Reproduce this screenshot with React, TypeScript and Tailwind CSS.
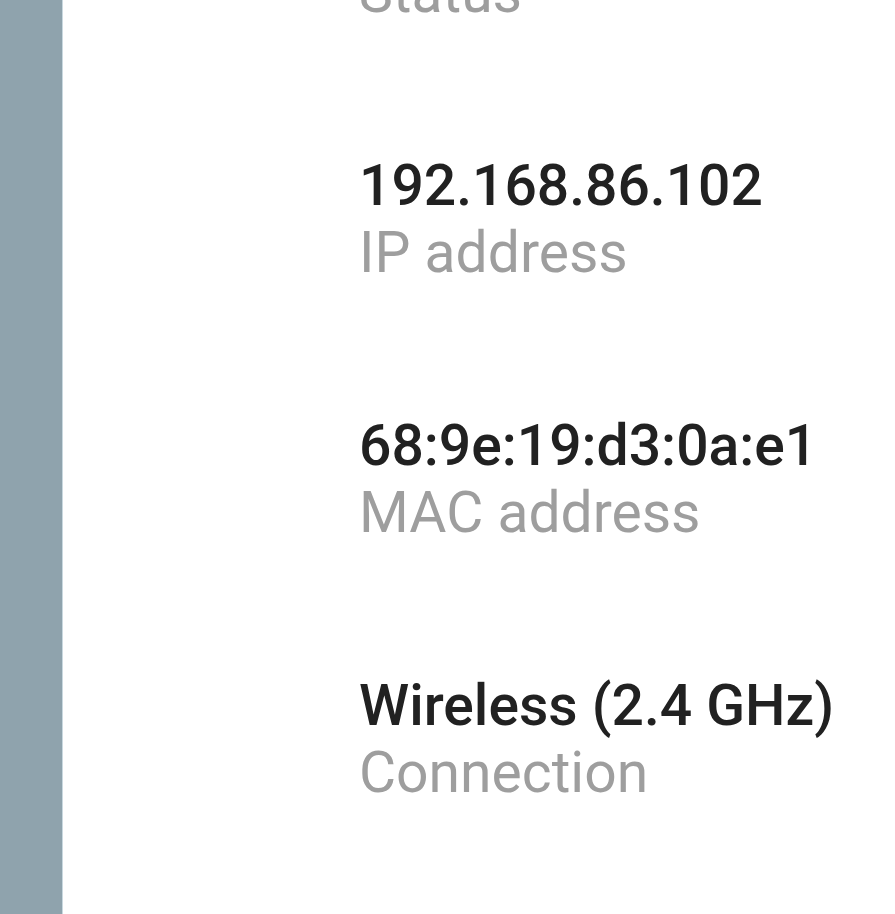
import React from 'react';

const rows = [
  { value: 'Online', label: 'Status' },
  { value: '192.168.86.102', label: 'IP address' },
  { value: '68:9e:19:d3:0a:e1', label: 'MAC address' },
  { value: 'Wireless (2.4 GHz)', label: 'Connection' },
];

export default function App() {
  return (
    <div className="flex h-[914px] w-full overflow-hidden bg-white font-['Roboto',sans-serif]">
      {/* side strip */}
      <div className="w-[63px] shrink-0 bg-[#8fa3ad] border-r border-[#c9d8df]" />

      {/* device details */}
      <div className="flex flex-col gap-[126px] pl-[296px] -mt-[108px]">
        {rows.map((row) => (
          <div key={row.label} className="flex flex-col">
            <span className="text-[57px] leading-[67px] font-medium text-[#212121] whitespace-nowrap">
              {row.value}
            </span>
            <span className="text-[57px] leading-[67px] text-[#9e9e9e] whitespace-nowrap">
              {row.label}
            </span>
          </div>
        ))}
      </div>
    </div>
  );
}
